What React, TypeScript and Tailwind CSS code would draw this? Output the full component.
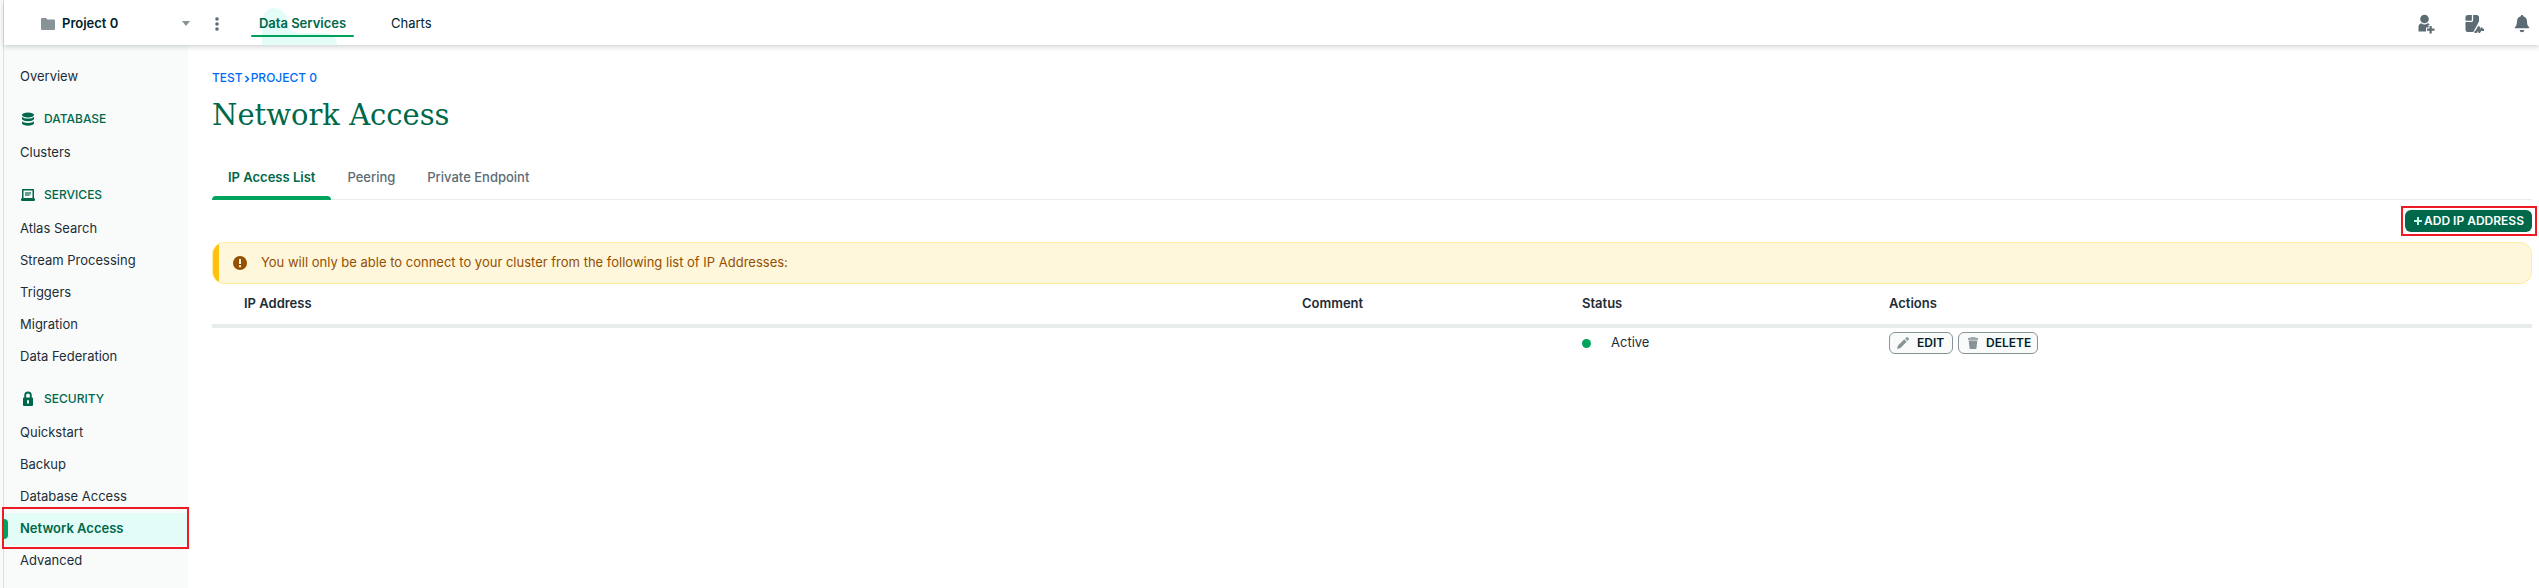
import type { ReactNode } from "react";

type NavSection = {
  title?: string;
  icon?: ReactNode;
  items: string[];
};

function DatabaseIcon() {
  return (
    <svg viewBox="0 0 16 16" className="size-4" fill="currentColor" aria-hidden="true">
      <ellipse cx="8" cy="4" rx="6" ry="2.5" />
      <path d="M2 5.8c1 1.3 3.3 1.8 6 1.8s5-.5 6-1.8v2.4c-.7 1.3-3.1 2-6 2s-5.3-.7-6-2z" />
      <path d="M2 10.3c1 1.2 3.3 1.7 6 1.7s5-.5 6-1.7v2.2c-.6 1.4-3.1 2.2-6 2.2s-5.4-.8-6-2.2z" />
    </svg>
  );
}

function LaptopIcon() {
  return (
    <svg viewBox="0 0 16 16" className="size-4" fill="currentColor" aria-hidden="true">
      <path fillRule="evenodd" d="M2.500 2h11a.5.5 0 0 1 .5.500V12H2V2.500a.5.5 0 0 1 .5-.5zM3.500 3.500V11h9V3.500z" />
      <path d="M1 11.500h14V13a1 1 0 0 1-1 1H2a1 1 0 0 1-1-1z" />
      <path d="M5 5h6v2.500H9.500V9H5z" opacity="0.6" />
    </svg>
  );
}

function LockIcon() {
  return (
    <svg viewBox="0 0 16 16" className="size-4" aria-hidden="true">
      <path d="M5.200 7V4.300a2.800 2.800 0 0 1 5.600 0V7" fill="none" stroke="currentColor" strokeWidth="1.900" />
      <path
        fill="currentColor"
        fillRule="evenodd"
        d="M4 6.500h8a1 1 0 0 1 1 1V14a1 1 0 0 1-1 1H4a1 1 0 0 1-1-1V7.500a1 1 0 0 1 1-1zM8 9a1 1 0 0 0-1 1v2.500h2V10a1 1 0 0 0-1-1z"
      />
    </svg>
  );
}

function InviteIcon() {
  return (
    <svg viewBox="0 0 18 20" className="h-5 w-[18px]" fill="currentColor" aria-hidden="true">
      <circle cx="6.500" cy="5" r="4.300" />
      <path d="M.500 17.500v-4.500c0-2.200 1.200-3.500 2.800-3.800.9.800 2 1.200 3.200 1.200s2.300-.4 3.200-1.200c1 .2 1.800.8 2.300 1.600h-1.500v2.700H8v4z" />
      <path d="M11.500 12h2.200v2.500h2.800v2.200h-2.800v2.800h-2.200v-2.800H9v-2.200h2.500z" />
    </svg>
  );
}

function ActivityIcon() {
  return (
    <svg viewBox="0 0 20 20" className="size-5" aria-hidden="true">
      <path fill="currentColor" d="M3 1h8.500A2.500 2.500 0 0 1 14 3.500V18H2.500A2 2 0 0 1 .5 16V3.500A2.500 2.500 0 0 1 3 1z" />
      <path d="M7.500 0v6.300a1 1 0 0 1-1 1H0" fill="none" stroke="#fff" strokeWidth="1.300" />
      <path d="M8.500 20v-2.500l3.500-5.500 2.500-2V20z" fill="#fff" />
      <path d="M9.500 17.500h1.700l2.300-4.500.8 5 2.200-4 .5 1h2.500" fill="none" stroke="#fff" strokeWidth="4.200" />
      <path d="M9.500 17.800h1.800l2.400-4.600.6 4.800 2.200-3.500.6 1.300h1.900" fill="none" stroke="currentColor" strokeWidth="2.200" strokeLinejoin="round" />
    </svg>
  );
}

function BellIcon() {
  return (
    <svg viewBox="0 0 16 20" className="h-5 w-4" fill="currentColor" aria-hidden="true">
      <path d="M8 1c.8 0 1.200.5 1.200 1.200C11.600 2.800 13 4.800 13 7.300c0 3 .5 4.500 2 5.700.5.500.3 1.200-.4 1.200H1.400c-.7 0-.9-.7-.4-1.200 1.500-1.200 2-2.700 2-5.700 0-2.500 1.400-4.500 3.800-5.100C6.800 1.500 7.200 1 8 1z" />
      <path d="M5.700 16h4.600a2.300 2.300 0 0 1-4.600 0z" />
    </svg>
  );
}

const sections: NavSection[] = [
  { items: ["Overview"] },
  { title: "DATABASE", icon: <DatabaseIcon />, items: ["Clusters"] },
  {
    title: "SERVICES",
    icon: <LaptopIcon />,
    items: ["Atlas Search", "Stream Processing", "Triggers", "Migration", "Data Federation"],
  },
  {
    title: "SECURITY",
    icon: <LockIcon />,
    items: ["Quickstart", "Backup", "Database Access", "Network Access", "Advanced"],
  },
];

const tabs = ["IP Access List", "Peering", "Private Endpoint"];

function TopBar() {
  return (
    <header className="relative z-10 flex h-[45px] items-center bg-white pt-0.5 pr-[9px] shadow-[0_2px_5px_rgba(0,30,43,0.18)]">
      <button className="ml-[37px] flex w-[149px] items-center text-[13px] font-semibold text-[#001e2b]">
        <svg viewBox="0 0 14 12" className="mr-[7px] h-3 w-3.5 fill-[#889397]" aria-hidden="true">
          <path d="M1 0h4l1.500 1.500H13a1 1 0 0 1 1 1V11a1 1 0 0 1-1 1H1a1 1 0 0 1-1-1V1a1 1 0 0 1 1-1z" />
        </svg>
        Project 0
        <svg viewBox="0 0 8 5" className="ml-auto h-[5px] w-2 fill-[#889397]" aria-hidden="true">
          <path d="M0 0h8L4 5z" />
        </svg>
      </button>
      <button aria-label="Project options" className="ml-6 text-[#5c6c75]">
        <svg viewBox="0 0 6 14" className="h-3.5 w-1.5" fill="currentColor" aria-hidden="true">
          <circle cx="3" cy="2" r="1.800" />
          <circle cx="3" cy="7" r="1.800" />
          <circle cx="3" cy="12" r="1.800" />
        </svg>
      </button>

      <nav className="ml-[31px] flex h-full items-center text-[13px] text-[#001e2b]">
        <a href="#data" className="relative flex h-full w-[103px] items-center justify-center font-semibold text-[#00684a]">
          {/* pale blob behind the active product */}
          <svg viewBox="0 0 76 37" className="absolute bottom-0 left-[11px] h-[37px] w-[76px] fill-[#e3fcf7]" aria-hidden="true">
            <path d="M0 37V12.500a12.500 12.500 0 0 1 25 0c0 8 5 12.500 13 12.500h23c8 0 14 4 14 12z" />
          </svg>
          <span className="relative">Data Services</span>
          <span className="absolute bottom-2 left-0 h-0.5 w-full rounded-full bg-[#00a35c]" />
        </a>
        <a href="#charts" className="ml-[37px]">
          Charts
        </a>
      </nav>

      <div className="ml-auto flex items-center gap-[29px] text-[#5c6c75]">
        <button aria-label="Invite users">
          <InviteIcon />
        </button>
        <button aria-label="Activity feed">
          <ActivityIcon />
        </button>
        <button aria-label="Alerts">
          <BellIcon />
        </button>
      </div>
    </header>
  );
}

function Sidebar() {
  return (
    <nav className="w-[184px] shrink-0 bg-[#f9fbfa] pt-4 text-[13px] text-[#1c2d38]">
      {sections.map((section, i) => (
        <div key={i}>
          {section.title && (
            <h2 className="mt-[18px] mb-2.5 flex h-4 items-center gap-2 pl-4 text-[12px] font-medium text-[#00684a]">
              {section.icon}
              {section.title}
            </h2>
          )}
          <ul>
            {section.items.map((item) => {
              const active = item === "Network Access";
              return (
                <li key={item} className="relative">
                  <a
                    href="#nav"
                    className={
                      active
                        ? "flex h-8 items-center bg-[#e3fcf7] pl-4 font-semibold text-[#00684a]"
                        : "flex h-8 items-center pl-4"
                    }
                  >
                    {item}
                  </a>
                  {active && (
                    <>
                      <span className="absolute top-1.5 left-0 h-5 w-1 rounded-r-md bg-[#00a35c]" />
                      <span className="pointer-events-none absolute -top-1.5 -right-px -bottom-1 -left-0.5 border-2 border-[#ed1c24]" />
                    </>
                  )}
                </li>
              );
            })}
          </ul>
        </div>
      ))}
    </nav>
  );
}

function AccessTable() {
  return (
    <table className="w-full table-fixed text-left text-[13px] text-[#1c2d38]">
      <thead>
        <tr className="h-[42px] border-b-4 border-[#e8edeb]">
          <th className="pl-8 font-semibold">IP Address</th>
          <th className="w-[280px] font-semibold">Comment</th>
          <th className="w-[307px] font-semibold">Status</th>
          <th className="w-[643px] font-semibold">Actions</th>
        </tr>
      </thead>
      <tbody>
        <tr className="h-8">
          <td />
          <td />
          <td>
            <div className="flex items-center gap-5">
              <span className="size-[9px] rounded-full bg-[#00a35c]" />
              Active
            </div>
          </td>
          <td>
            <div className="flex gap-[5px] text-[12px] font-semibold text-[#001e2b]">
              <button className="flex h-[22px] w-16 items-center gap-2 rounded-md border border-[#889397] bg-[#f9fbfa] pl-[7px]">
                <svg viewBox="0 0 12 12" className="size-3 shrink-0 fill-[#889397]" aria-hidden="true">
                  <path d="M0 12l1-3.500 6.300-6.200 2.400 2.400L3.500 11zM8.100 1.500L9.300.4a1 1 0 0 1 1.400 0l.9.9a1 1 0 0 1 0 1.400l-1.100 1.200z" />
                </svg>
                EDIT
              </button>
              <button className="flex h-[22px] w-20 items-center gap-2 rounded-md border border-[#889397] bg-[#f9fbfa] pl-[9px]">
                <svg viewBox="0 0 10 12" className="h-3 w-2.5 shrink-0 fill-[#889397]" aria-hidden="true">
                  <path d="M3 0h4l.5.800H9.500a.5.500 0 0 1 .5.500V3H0V1.300a.5.500 0 0 1 .5-.5h2z" opacity="0.800" />
                  <path d="M.7 3.500h8.600L8.500 11a1 1 0 0 1-1 1h-5a1 1 0 0 1-1-1z" />
                </svg>
                DELETE
              </button>
            </div>
          </td>
        </tr>
      </tbody>
    </table>
  );
}

export default function App() {
  return (
    <div className="flex min-h-screen flex-col border-l border-[#fafafa] bg-[#fafafa] pl-0.5 font-[Inter,sans-serif]">
      <div className="flex grow flex-col border-l border-[#dedede] bg-white">
        <TopBar />
        <div className="flex grow">
          <Sidebar />
          <main className="min-w-0 grow pt-6 pr-[7px] pl-6">
            <div className="flex h-[18px] items-center text-[12px] font-medium text-[#016bf8]">
              <a href="#test">TEST</a>
              <svg viewBox="0 0 8 8" className="mt-px size-2" fill="none" stroke="currentColor" strokeWidth="1.600" aria-hidden="true">
                <path d="M2.500 1l3 3-3 3" />
              </svg>
              <a href="#project">PROJECT 0</a>
            </div>
            <h1 className="mt-2 h-10 font-['DejaVu_Serif',serif] text-[29px] leading-10 text-[#00684a]">
              Network Access
            </h1>

            <div role="tablist" className="mt-[21px] flex h-11 border-b border-[#e8edeb] text-[13px] text-[#5c6c75]">
              {tabs.map((tab, i) => (
                <button
                  key={tab}
                  role="tab"
                  aria-selected={i === 0}
                  className={
                    i === 0
                      ? "relative px-4 font-semibold text-[#00684a]"
                      : "px-4 font-medium"
                  }
                >
                  {tab}
                  {i === 0 && (
                    <span className="absolute -bottom-px left-0 h-1 w-full rounded-t bg-[#00a35c]" />
                  )}
                </button>
              ))}
            </div>

            <div className="-mr-[5px] mt-1.5 flex justify-end">
              <div className="border-2 border-[#ed1c24] py-0.5 pr-[3px] pl-0.5">
                <button className="flex h-[22px] w-[127px] items-center justify-center rounded-md bg-[#00684a] text-[12px] font-semibold text-white">
                  <svg viewBox="0 0 10 10" className="mr-px size-2.5" stroke="#c0fae6" strokeWidth="2" aria-hidden="true">
                    <path d="M5 1v8M1 5h8" />
                  </svg>
                  ADD IP ADDRESS
                </button>
              </div>
            </div>

            <div className="relative mt-1.5 flex h-[42px] items-center gap-3.5 overflow-hidden rounded-xl border border-[#ffec9e] bg-[#fef7db] pl-5 text-[13px] text-[#944f01]">
              <span className="absolute -inset-y-px -left-px w-[7px] bg-[#ffc010]" />
              <svg viewBox="0 0 14 14" className="size-3.5" aria-hidden="true">
                <circle cx="7" cy="7" r="7" fill="#944f01" />
                <path d="M6 3h2v5H6zM6 9.200h2v2H6z" fill="#fef7db" />
              </svg>
              You will only be able to connect to your cluster from the following list of IP Addresses:
            </div>

            <AccessTable />
          </main>
        </div>
      </div>
    </div>
  );
}
